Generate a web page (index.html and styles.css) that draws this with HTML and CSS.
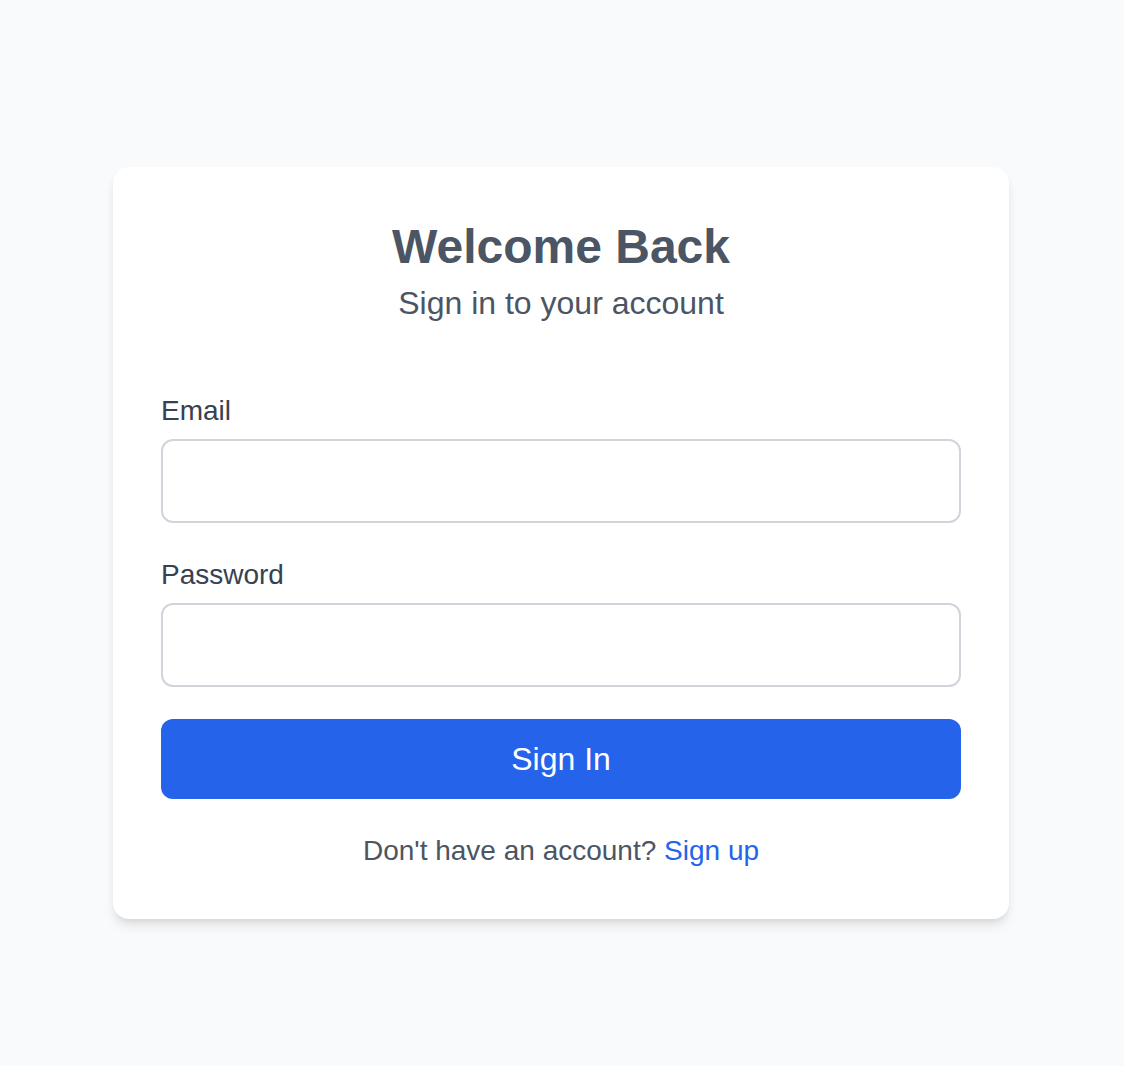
FILE: index.html
```html
<!DOCTYPE html>
<html lang="en">
<head>
<meta charset="utf-8">
<title>Sign In</title>
<link rel="stylesheet" href="styles.css">
</head>
<body>
<main class="page">
  <div class="card">
    <header class="head">
      <h1 class="title">Welcome Back</h1>
      <p class="subtitle">Sign in to your account</p>
    </header>
    <form class="form">
      <div class="field">
        <label class="label" for="email">Email</label>
        <input class="input" id="email" type="email">
      </div>
      <div class="field">
        <label class="label" for="password">Password</label>
        <input class="input" id="password" type="password">
      </div>
      <button class="btn" type="button">Sign In</button>
    </form>
    <p class="foot">Don't have an account? <a class="link" href="#">Sign up</a></p>
  </div>
</main>
</body>
</html>
```
FILE: styles.css
```css
* { box-sizing: border-box; }
html, body {
  margin: 0;
  padding: 0;
  background: #f9fafb;
  font-family: "Liberation Sans", Arial, sans-serif;
}
.page {
  min-height: 1066px;
  padding: 167px 2px 0 0;
  display: flex;
  justify-content: center;
  align-items: flex-start;
}
.card {
  width: 896px;
  background: #ffffff;
  border-radius: 16px;
  padding: 48px;
  box-shadow: 0 8px 12px -2px rgba(0,0,0,0.1), 0 4px 8px -4px rgba(0,0,0,0.1);
}
.head {
  text-align: center;
  margin-bottom: 64px;
}
.title {
  margin: 0;
  font-size: 48px;
  line-height: 64px;
  font-weight: 700;
  color: #4b5563;
}
.subtitle {
  margin: 0;
  font-size: 32px;
  line-height: 48px;
  color: #4b5563;
}
.form {
  display: flex;
  flex-direction: column;
  gap: 32px;
}
.field {
  display: flex;
  flex-direction: column;
  gap: 8px;
}
.label {
  font-size: 28px;
  line-height: 40px;
  color: #374151;
}
.input {
  display: block;
  width: 100%;
  height: 84px;
  border: 2px solid #d1d5db;
  border-radius: 12px;
  padding: 16px 24px;
  font-size: 32px;
  font-family: inherit;
  background: #fff;
  outline: none;
}
.btn {
  display: block;
  width: 100%;
  height: 80px;
  border: none;
  border-radius: 12px;
  background: #2563eb;
  color: #ffffff;
  font-family: inherit;
  font-size: 32px;
  line-height: 48px;
  padding: 16px;
  cursor: pointer;
}
.foot {
  margin: 32px 0 0;
  text-align: center;
  font-size: 28px;
  line-height: 40px;
  color: #4b5563;
}
.link {
  color: #2563eb;
  text-decoration: none;
}
```
